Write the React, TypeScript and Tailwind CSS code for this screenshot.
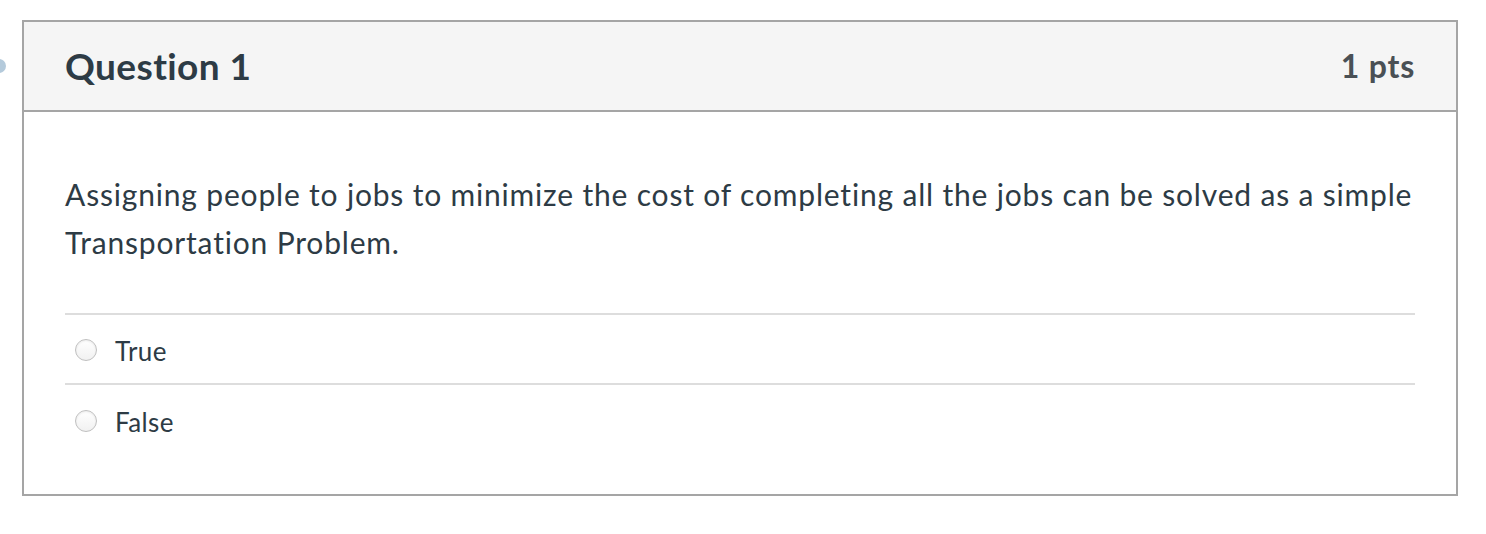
export default function App() {
  const options = ["True", "False"];
  return (
    <div className="relative h-[534px] w-[1486px] bg-white font-['Lato','Liberation_Sans',sans-serif] text-[#2d3b45]">
      {/* cut-off nav marker on the left edge */}
      <div className="absolute left-[-8px] top-[59px] h-[14px] w-[14px] rounded-full bg-[#b4cadb]" />

      <div className="ml-[22px] pt-[20px]">
        <div className="w-[1436px] border-2 border-[#a5a5a5]">
          {/* Header */}
          <div className="flex h-[90px] items-center justify-between border-b-2 border-[#a5a5a5] bg-[#f5f5f5] px-[41px]">
            <h2 className="text-[37px] font-bold tracking-[0.4px]">Question 1</h2>
            <span className="text-[32px] font-bold tracking-[0.8px] text-[#4a5055]">1 pts</span>
          </div>

          {/* Body */}
          <div className="px-[41px] pb-[39px] pt-[58px]">
            <p className="mr-[-8px] text-[30px] leading-[48px] tracking-[0.82px]">
              Assigning people to jobs to minimize the cost of completing all the jobs can be solved as a simple
              Transportation Problem.
            </p>

            <div className="mt-[47px] border-t-2 border-[#dddddd]">
              {options.map((opt, i) => (
                <div
                  key={opt}
                  className={`flex h-[70px] items-center ${i < options.length - 1 ? "border-b-2 border-[#dddddd]" : ""}`}
                >
                  <span className="ml-[10px] mt-[2px] h-[22px] w-[22px] rounded-full border border-[#c0c0c0] bg-gradient-to-b from-white to-[#f1f1f1] shadow-[inset_0_1px_2px_rgba(0,0,0,0.08)]" />
                  <span className="ml-[18px] pt-[4px] text-[26px] tracking-[0.4px]">{opt}</span>
                </div>
              ))}
            </div>
          </div>
        </div>
      </div>
    </div>
  );
}
